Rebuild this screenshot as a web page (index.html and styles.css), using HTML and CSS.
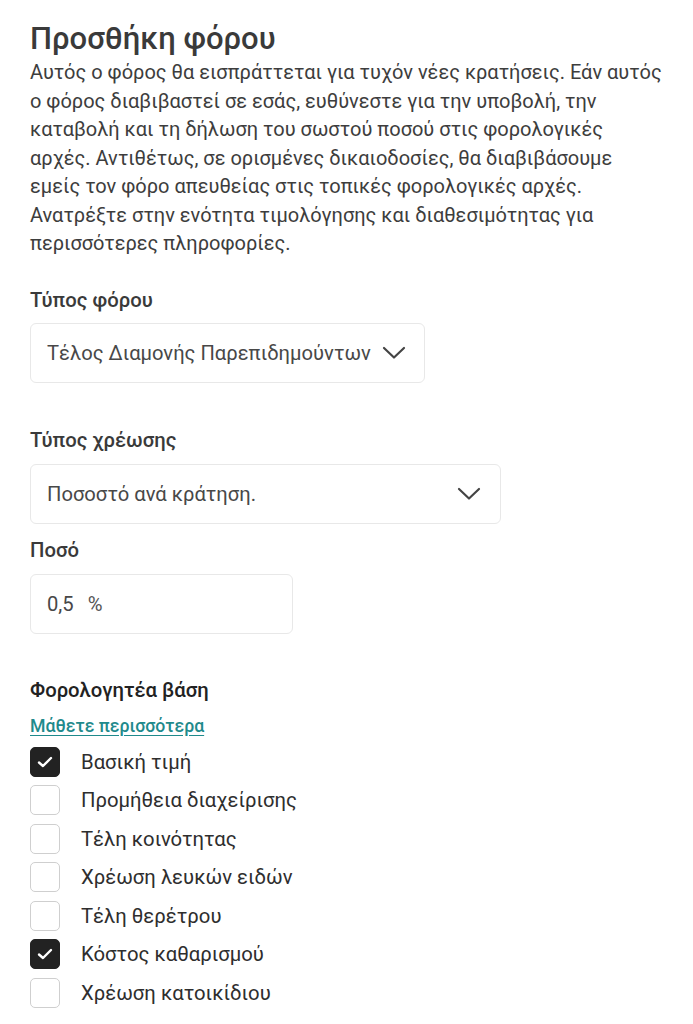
FILE: index.html
```html
<!DOCTYPE html>
<html lang="el">
<head>
<meta charset="utf-8">
<link rel="stylesheet" href="styles.css">
</head>
<body>
<main class="page">
  <h1 class="title">Προσθήκη φόρου</h1>
  <p class="intro">Αυτός ο φόρος θα εισπράττεται για τυχόν νέες κρατήσεις. Εάν αυτός<br>ο φόρος διαβιβαστεί σε εσάς, ευθύνεστε για την υποβολή, την<br>καταβολή και τη δήλωση του σωστού ποσού στις φορολογικές<br>αρχές. Αντιθέτως, σε ορισμένες δικαιοδοσίες, θα διαβιβάσουμε<br>εμείς τον φόρο απευθείας στις τοπικές φορολογικές αρχές.<br>Ανατρέξτε στην ενότητα τιμολόγησης και διαθεσιμότητας για<br>περισσότερες πληροφορίες.</p>

  <section class="field field-tax">
    <div class="label">Τύπος φόρου</div>
    <div class="select select-tax">
      <span class="select-text">Τέλος Διαμονής Παρεπιδημούντων</span>
      <svg class="chev" width="24" height="14" viewBox="0 0 24 14"><path d="M2 2 L12 11.5 L22 2" fill="none" stroke="#444" stroke-width="2.2" stroke-linecap="round" stroke-linejoin="round"/></svg>
    </div>
  </section>

  <section class="field field-charge">
    <div class="label">Τύπος χρέωσης</div>
    <div class="select select-charge">
      <span class="select-text">Ποσοστό ανά κράτηση.</span>
      <svg class="chev" width="24" height="14" viewBox="0 0 24 14"><path d="M2 2 L12 11.5 L22 2" fill="none" stroke="#444" stroke-width="2.2" stroke-linecap="round" stroke-linejoin="round"/></svg>
    </div>
  </section>

  <section class="field field-amount">
    <div class="label">Ποσό</div>
    <div class="input">
      <span class="value">0,5</span><span class="unit">%</span>
    </div>
  </section>

  <section class="base">
    <div class="base-title">Φορολογητέα βάση</div>
    <a class="learn" href="#">Μάθετε περισσότερα</a>
    <ul class="checks">
      <li class="check"><span class="box on"><svg width="18" height="14" viewBox="0 0 18 14"><path d="M3 7.5 L7 11 L15 3" fill="none" stroke="#fff" stroke-width="2.4" stroke-linecap="round" stroke-linejoin="round"/></svg></span>Βασική τιμή</li>
      <li class="check"><span class="box"></span>Προμήθεια διαχείρισης</li>
      <li class="check"><span class="box"></span>Τέλη κοινότητας</li>
      <li class="check"><span class="box"></span>Χρέωση λευκών ειδών</li>
      <li class="check"><span class="box"></span>Τέλη θερέτρου</li>
      <li class="check"><span class="box on"><svg width="18" height="14" viewBox="0 0 18 14"><path d="M3 7.5 L7 11 L15 3" fill="none" stroke="#fff" stroke-width="2.4" stroke-linecap="round" stroke-linejoin="round"/></svg></span>Κόστος καθαρισμού</li>
      <li class="check"><span class="box"></span>Χρέωση κατοικίδιου</li>
    </ul>
  </section>
</main>
</body>
</html>
```

FILE: styles.css
```css
* { box-sizing: border-box; }
html, body { margin: 0; padding: 0; background: #fff; }
body {
  font-family: Roboto, "Noto Sans", "Liberation Sans", sans-serif;
  color: #3d3d3d;
}
.page {
  padding: 20px 10px 20px 30px;
}
.title {
  margin: 0;
  font-size: 31px;
  font-weight: 500;
  line-height: 38px;
  color: #3a3a3a;
}
.intro {
  margin: 0;
  font-size: 20px;
  line-height: 28.5px;
  color: #3d3d3d;
  white-space: nowrap;
}
.field { display: flex; flex-direction: column; }
.label {
  font-size: 20.3px;
  font-weight: 500;
  line-height: 24px;
  color: #3a3a3a;
  margin-bottom: 11px;
}
.field-tax { margin-top: 30px; }
.field-charge { margin-top: 45px; }
.field-charge .label { margin-bottom: 12px; }
.field-amount { margin-top: 14px; }
.field-amount .label { margin-bottom: 12px; }
.select, .input {
  height: 60px;
  border: 1.5px solid #e8e8e8;
  border-radius: 6px;
  display: flex;
  align-items: center;
  padding: 0 16px;
  font-size: 20.2px;
  color: #484848;
}
.select { gap: 11px; }
.select-tax { width: 395px; }
.select-charge { width: 471px; padding-right: 19px; justify-content: space-between; }
.input { width: 263px; }
.value { color: #484848; }
.unit { margin-left: 14px; color: #555; }
.base { margin-top: 44px; }
.base-title {
  font-size: 20.3px;
  font-weight: 500;
  line-height: 24px;
  color: #222;
}
.learn {
  display: inline-block;
  margin-top: 13px;
  font-size: 17.7px;
  font-weight: 500;
  line-height: 22px;
  color: #1f8a8c;
  text-decoration: underline;
  text-underline-offset: 3px;
}
.checks {
  list-style: none;
  margin: 10px 0 0;
  padding: 0;
  display: flex;
  flex-direction: column;
  gap: 8.5px;
}
.check {
  display: flex;
  align-items: center;
  gap: 21px;
  font-size: 20.3px;
  line-height: 30px;
  color: #2e2e2e;
}
.box {
  width: 30px;
  height: 30px;
  border: 1.5px solid #cfcfcf;
  border-radius: 5px;
  display: flex;
  align-items: center;
  justify-content: center;
  flex-shrink: 0;
}
.box.on { background: #222; border-color: #222; }
```
